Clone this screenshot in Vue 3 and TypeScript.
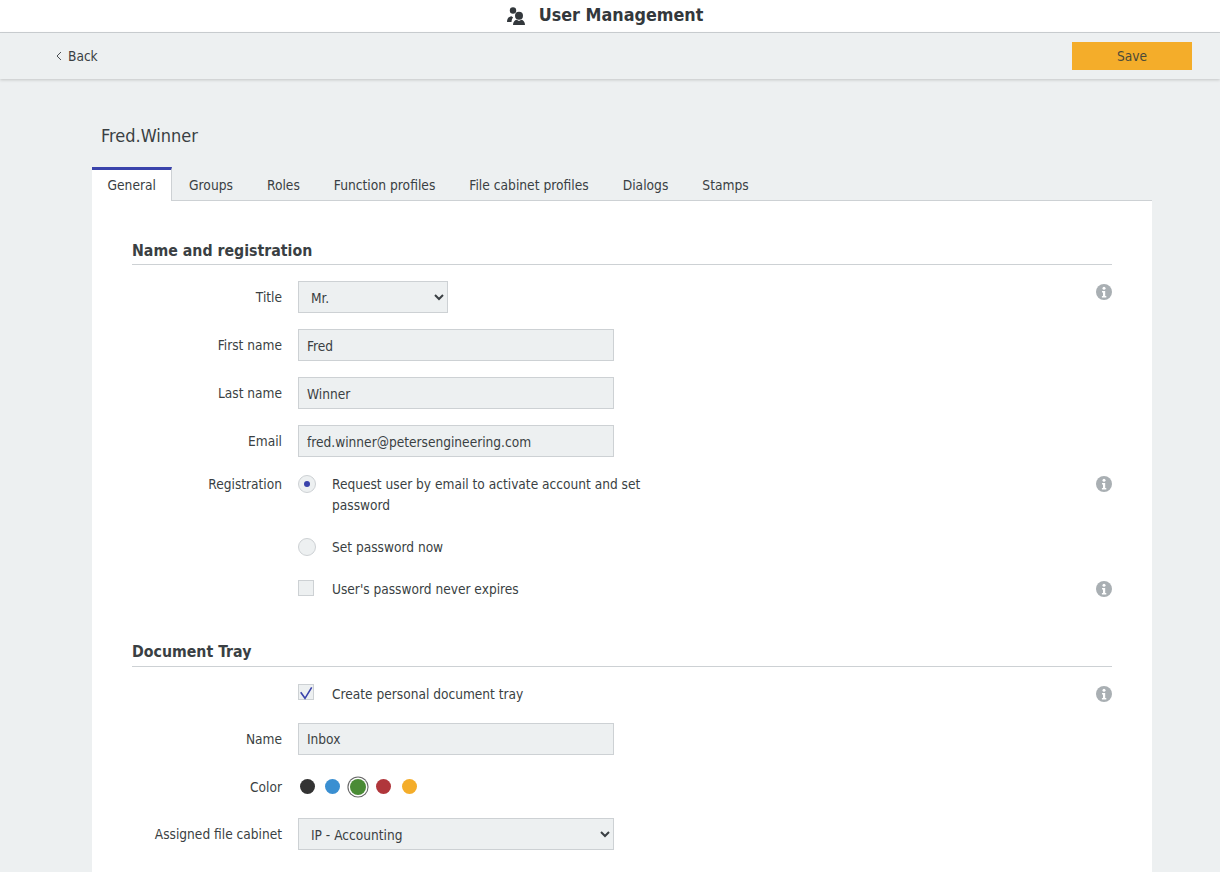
<template>
  <div class="page">
    <header class="title-bar">
      <svg class="title-icon" viewBox="0 0 18 18" fill="#33383c">
        <circle cx="6" cy="3.5" r="3.2" />
        <path d="M0 15c0-3.5 1.8-5.5 4.5-5.8l1.6 1.3c-.9.8-1.4 2.1-1.6 4.5z" />
        <circle cx="12" cy="8.7" r="4" />
        <path d="M6 18c0-3 1.6-5 3.6-5.3l2.4 1.3 2.4-1.3c2 .3 3.6 2.3 3.6 5.3z" />
      </svg>
      <h1>User Management</h1>
    </header>

    <div class="toolbar">
      <a class="back">
        <svg viewBox="0 0 6 10" fill="none" stroke="#4a4f53" stroke-width="1">
          <polyline points="5 1 1 5 5 9" />
        </svg>
        Back
      </a>
      <button class="save">Save</button>
    </div>

    <main class="content">
      <div class="user-name">Fred.Winner</div>

      <nav class="tabs">
        <a v-for="tab in tabs" :key="tab" class="tab" :class="{ active: tab === 'General' }">{{ tab }}</a>
      </nav>

      <section class="panel">
        <h2>Name and registration</h2>

        <div class="row">
          <label>Title</label>
          <select class="field short"><option>Mr.</option></select>
          <svg class="info" viewBox="0 0 16 16"><use href="#info-glyph" /></svg>
        </div>
        <div v-for="item in nameFields" :key="item.label" class="row">
          <label>{{ item.label }}</label>
          <input class="field" :value="item.value" />
        </div>

        <div class="row top option-row">
          <label>Registration</label>
          <span class="radio checked"></span>
          <span class="option-text">Request user by email to activate account and set password</span>
          <svg class="info" viewBox="0 0 16 16"><use href="#info-glyph" /></svg>
        </div>
        <div class="row top option-row spaced">
          <label></label>
          <span class="radio"></span>
          <span class="option-text">Set password now</span>
        </div>
        <div class="row top option-row spaced">
          <label></label>
          <span class="check"></span>
          <span class="option-text">User's password never expires</span>
          <svg class="info" viewBox="0 0 16 16"><use href="#info-glyph" /></svg>
        </div>

        <h2 class="tray-heading">Document Tray</h2>

        <div class="row top option-row tray-check">
          <label></label>
          <span class="check">
            <svg viewBox="0 0 16 16" fill="none" stroke="#3a43ab" stroke-width="1.6">
              <polyline points="2.7 8.3 7 14.3 13.7 3.3" />
            </svg>
          </span>
          <span class="option-text">Create personal document tray</span>
          <svg class="info" viewBox="0 0 16 16"><use href="#info-glyph" /></svg>
        </div>
        <div class="row">
          <label>Name</label>
          <input class="field inbox" value="Inbox" />
        </div>
        <div class="row colors-row">
          <label>Color</label>
          <div class="colors">
            <span
              v-for="c in colors"
              :key="c"
              class="dot"
              :class="{ selected: c === selectedColor }"
              :style="{ backgroundColor: c }"
            ></span>
          </div>
        </div>
        <div class="row">
          <label>Assigned file cabinet</label>
          <select class="field"><option>IP - Accounting</option></select>
        </div>
      </section>
    </main>

    <svg width="0" height="0" class="defs">
      <defs>
        <g id="info-glyph">
          <circle cx="8" cy="8" r="8" fill="#a9afb3" />
          <circle cx="8" cy="4.3" r="1.5" fill="#fff" />
          <path d="M6 7h3.2v5H10.3v1.4H5.9V12H7V8.4H6z" fill="#fff" />
        </g>
      </defs>
    </svg>
  </div>
</template>

<script setup lang="ts">
const tabs = ['General', 'Groups', 'Roles', 'Function profiles', 'File cabinet profiles', 'Dialogs', 'Stamps'];

const nameFields = [
  { label: 'First name', value: 'Fred' },
  { label: 'Last name', value: 'Winner' },
  { label: 'Email', value: 'fred.winner@petersengineering.com' },
];

const colors = ['#333333', '#3a8fd1', '#4a8b35', '#b0363b', '#f4ad2a'];
const selectedColor = '#4a8b35';
</script>

<style scoped>
.page {
  height: 872px;
  overflow: hidden;
  background: #edf0f1;
  color: #3a3f43;
  font-family: "DejaVu Sans Condensed", "Open Sans", sans-serif;
  font-size: 13.6px;
}

.title-bar {
  height: 30px;
  padding: 0 10px 2px 0;
  background: #fff;
  border-bottom: 1px solid #cdd1d4;
  display: flex;
  align-items: center;
  justify-content: center;
  gap: 14px;
}

.title-bar h1 {
  margin: -2px 0 0;
  font-size: 17.8px;
  font-weight: 700;
  color: #33383c;
}

.title-icon {
  width: 18px;
  height: 18px;
  margin-top: 1px;
}

.toolbar {
  height: 46px;
  display: flex;
  align-items: center;
  justify-content: space-between;
  padding: 0 28px 0 56px;
  box-shadow: 0 1px 3px rgba(0, 0, 0, 0.18);
}

.back {
  display: flex;
  align-items: center;
  gap: 6px;
  margin-top: -1px;
}

.back svg {
  width: 6px;
  height: 10px;
}

.save {
  width: 120px;
  height: 28px;
  border: none;
  padding: 0;
  background: #f4ad2a;
  color: #4a4a3a;
  font: inherit;
}

.content {
  padding: 0 68px 0 92px;
}

.user-name {
  margin: 44px 0 0 9px;
  height: 44px;
  font-size: 18px;
  line-height: 26px;
}

.tabs {
  display: flex;
  height: 33px;
  border-bottom: 1px solid #cdd1d4;
  font-size: 13.7px;
}

.tab {
  padding: 0 17px;
  line-height: 36px;
  height: 33px;
}

.tab.active {
  box-sizing: border-box;
  height: 34px;
  padding: 0 15px 0 15.5px;
  background: #fff;
  border-top: 3px solid #3a43ab;
  border-right: 1px solid #cdd1d4;
  line-height: 30px;
}

.panel {
  background: #fff;
  padding: 36px 40px 40px;
  height: 700px;
}

h2 {
  margin: 0 0 16px;
  height: 27px;
  border-bottom: 1px solid #cdd1d4;
  font-size: 15.75px;
  font-weight: 700;
  line-height: 28px;
}

.tray-heading {
  margin-top: 38px;
  height: 28px;
  margin-bottom: 16px;
}

.row {
  position: relative;
  display: flex;
  align-items: center;
  margin-bottom: 16px;
  min-height: 32px;
}

.row.top {
  align-items: flex-start;
  min-height: 0;
}

.row label {
  width: 150px;
  margin-right: 16px;
  text-align: right;
  flex: none;
}

.row.top label,
.colors-row label {
  padding-top: 1px;
}

.field {
  box-sizing: border-box;
  width: 316px;
  height: 32px;
  padding: 1px 8px 0;
  border: 1px solid #cdd1d4;
  border-radius: 0;
  background: #edf0f1;
  color: #3a3f43;
  font: inherit;
}

.field.inbox {
  padding-top: 0;
}

.field.short {
  width: 150px;
}

.info {
  position: absolute;
  right: 0;
  top: 0;
  width: 16px;
  height: 16px;
  margin-top: 3px;
}

.option-row {
  line-height: 21px;
}

.option-row.spaced {
  margin-top: 20px;
}

.tray-check {
  margin-bottom: 18px;
}

.radio,
.check {
  flex: none;
  box-sizing: border-box;
  width: 18px;
  height: 18px;
  margin-right: 16px;
  margin-top: 2px;
  border: 1px solid #cdd1d4;
  background: #edf0f1;
  display: flex;
  align-items: center;
  justify-content: center;
}

.radio {
  border-radius: 50%;
}

.radio.checked::after {
  content: "";
  width: 6px;
  height: 6px;
  border-radius: 50%;
  background: #3a43ab;
}

.check {
  width: 16px;
  height: 16px;
  margin-right: 18px;
}

.tray-check .check {
  margin-top: 1px;
}

.check svg {
  width: 16px;
  height: 16px;
  flex: none;
}

.option-text {
  width: 330px;
  padding-top: 1px;
}

.colors-row {
  min-height: 31px;
}

.colors {
  display: flex;
  align-items: center;
  gap: 10.5px;
  margin-left: 1.5px;
}

.dot {
  width: 15px;
  height: 15px;
  border-radius: 50%;
}

.dot.selected {
  width: 16px;
  height: 16px;
  margin: 0 -0.5px;
  box-shadow: 0 0 0 1.5px #fff, 0 0 0 2.6px #666;
}

.defs {
  position: absolute;
}
</style>
